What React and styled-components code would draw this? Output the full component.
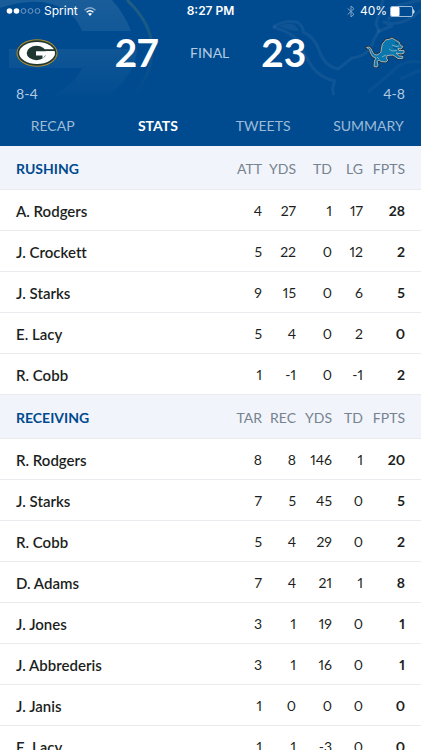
import React, { useState } from 'react'
import styled, { createGlobalStyle } from 'styled-components'

const tabs = ['RECAP', 'STATS', 'TWEETS', 'SUMMARY']

const sections = [
  {
    title: 'RUSHING',
    columns: ['ATT', 'YDS', 'TD', 'LG', 'FPTS'],
    players: [
      ['A. Rodgers', 4, 27, 1, 17, 28],
      ['J. Crockett', 5, 22, 0, 12, 2],
      ['J. Starks', 9, 15, 0, 6, 5],
      ['E. Lacy', 5, 4, 0, 2, 0],
      ['R. Cobb', 1, -1, 0, -1, 2],
    ],
  },
  {
    title: 'RECEIVING',
    columns: ['TAR', 'REC', 'YDS', 'TD', 'FPTS'],
    players: [
      ['R. Rodgers', 8, 8, 146, 1, 20],
      ['J. Starks', 7, 5, 45, 0, 5],
      ['R. Cobb', 5, 4, 29, 0, 2],
      ['D. Adams', 7, 4, 21, 1, 8],
      ['J. Jones', 3, 1, 19, 0, 1],
      ['J. Abbrederis', 3, 1, 16, 0, 1],
      ['J. Janis', 1, 0, 0, 0, 0],
      ['E. Lacy', 1, 1, -3, 0, 0],
    ],
  },
]

function PackersLogo() {
  return (
    <svg width="42" height="28" viewBox="0 0 42 28" aria-label="Green Bay">
      <ellipse cx="21" cy="14" rx="20.5" ry="13.7" fill="#a88b35" />
      <ellipse cx="21" cy="14" rx="19.5" ry="12.8" fill="#203731" />
      <ellipse cx="21" cy="14" rx="17.9" ry="11" fill="#fff" />
      <ellipse cx="20.5" cy="14" rx="9.8" ry="7.2" fill="#203731" />
      <path d="M26 10.2 H39 V12.2 H26 Z" fill="#203731" />
      <path d="M20 12.2 H38.5 V16.6 H29 Q28.5 18 26.5 19.4 V16.6 H20 Z" fill="#fff" />
    </svg>
  )
}

const lionBody =
  'M1.5 10.5 Q4 9 6 11.5 L7.5 15 Q9 18.5 12 18 Q14.5 17 16 15 L16.5 11 Q17 6 19.5 4.5 Q20 2 24 2.5 L27 1 L31 3.5 L34 5 L35.5 8.5 L38 9.5 L36 12 L33 11.5 L34 13.5 L39 13.5 L39 16 L36 17 L31 16 L34.5 19 L38 19.5 L37.5 21.5 L33 21.5 L28 18 L22 18.5 L21.5 22 L23 23 L21 25 L16 24.5 L14 23 L12 24.5 L13 28 L12 30 L9 29.5 L9.5 24 L11 21 Q7 20.5 5.5 16 L4.5 12.5 Z'

function LionsLogo() {
  return (
    <svg width="40" height="32" viewBox="0 0 40 32" aria-label="Detroit">
      <path d={lionBody} fill="none" stroke="#22303c" strokeWidth="2.2" strokeLinejoin="round" />
      <path d={lionBody} fill="#0878ae" stroke="#b3babd" strokeWidth="0.9" strokeLinejoin="round" />
      <path d="M27 8 L31 9.5 L34 9 M24 12 L27 14 L32 13.5 M17 20 L21 18 M12 20 L14 22" fill="none" stroke="#9fb6c4" strokeWidth="0.8" />
      <path d="M30 5.5 L33 7.5 M28 10.5 L32 11.5" fill="none" stroke="#173a55" strokeWidth="0.8" />
    </svg>
  )
}

function PackersMark() {
  return (
    <Mark width="160" height="100" viewBox="0 0 160 100" aria-hidden="true">
      <defs>
        <linearGradient id="fade" x1="0" y1="0" x2="0" y2="100" gradientUnits="userSpaceOnUse">
          <stop offset="0" stopColor="#fff" stopOpacity="0.1" />
          <stop offset="0.6" stopColor="#fff" stopOpacity="0.05" />
          <stop offset="1" stopColor="#fff" stopOpacity="0" />
        </linearGradient>
        <linearGradient id="ring" x1="0" y1="0" x2="0" y2="95" gradientUnits="userSpaceOnUse">
          <stop offset="0" stopColor="#8b9a5b" stopOpacity="0.25" />
          <stop offset="1" stopColor="#8b9a5b" stopOpacity="0" />
        </linearGradient>
      </defs>
      <path d="M0 0 H112 Q124 13 131 31 H82 Q74 11 52 4 Q30 -2 0 8 Z" fill="url(#fade)" />
      <path d="M9 49 H137 Q136 74 108 96 H50 Q74 86 82 68 H9 Z" fill="url(#fade)" />
      <path d="M127 0 Q152 24 152 49 Q152 73 136 92" fill="none" stroke="url(#ring)" strokeWidth="3" />
    </Mark>
  )
}

function LionsMark() {
  return (
    <Mark $right width="150" height="100" viewBox="271 0 150 100" aria-hidden="true">
      <g fill="none" stroke="#fff" strokeOpacity="0.06" strokeWidth="3" strokeLinejoin="round">
        <path d="M273 27 Q284 20 297 22 Q304 27 303 32 Q314 36 319 50 Q324 66 338 69 L352 58 Q370 56 374 39 L379 31 L376 24 L383 0" />
        <path d="M273 27 Q293 33 299 42 Q306 58 313 68 Q321 78 335 81 Q331 88 334 95" />
        <path d="M377 32 L392 26 L384 22 Q402 28 421 10 M388 20 L399 5 L421 0" />
        <path d="M421 62 Q402 59 392 72 L368 92 M421 70 L400 79" strokeOpacity="0.03" />
      </g>
      <path d="M279 26 Q288 22 295 25 L299 31 Q288 31 279 26 Z" fill="#fff" fillOpacity="0.06" />
    </Mark>
  )
}

function App() {
  const [active, setActive] = useState('STATS')
  return (
    <Page>
      <GlobalStyle />
      <Header>
        <PackersMark />
        <LionsMark />
        <StatusBar>
          <Carrier>
            <svg width="36" height="8" viewBox="0 0 36 8">
              <circle cx="3.5" cy="4" r="2.8" fill="#fff" />
              <circle cx="10.5" cy="4" r="2.8" fill="#fff" />
              <circle cx="17.5" cy="4" r="2.4" fill="none" stroke="#8cacd0" strokeWidth="0.8" />
              <circle cx="24.5" cy="4" r="2.4" fill="none" stroke="#8cacd0" strokeWidth="0.8" />
              <circle cx="31.5" cy="4" r="2.4" fill="none" stroke="#8cacd0" strokeWidth="0.8" />
            </svg>
            Sprint
            <Wifi width="12" height="9" viewBox="0 0 12 9" fill="none" strokeWidth="1.4">
              <path d="M0.6 3.2 Q6 -1.6 11.4 3.2" stroke="#8cacd0" />
              <path d="M2.6 5.2 Q6 2.2 9.4 5.2" stroke="#fff" />
              <path d="M4 6.8 Q6 5.2 8 6.8 L6 9 Z" fill="#fff" />
            </Wifi>
          </Carrier>
          <Clock>8:27 PM</Clock>
          <Power>
            <svg width="8" height="13" viewBox="0 0 8 13" fill="none" stroke="#7fa5cb" strokeWidth="1">
              <path d="M0.7 3.5 L7 9.3 L4 12 V1 L7 3.7 L0.7 9.5" />
            </svg>
            <Percent>40%</Percent>
            <svg width="25" height="11" viewBox="0 0 25 11">
              <rect x="0.5" y="0.5" width="22" height="10" rx="1.5" fill="none" stroke="#9dbbd8" />
              <rect x="1" y="1" width="8.5" height="9" rx="1" fill="#fff" />
              <path d="M23.5 3.5 Q25 5.5 23.5 7.5 Z" fill="#fff" stroke="#fff" strokeWidth="0.5" />
            </svg>
          </Power>
        </StatusBar>
        <Scoreboard>
          <PackersLogo />
          <Result>
            <Score>27</Score>
            <Final>FINAL</Final>
            <Score>23</Score>
          </Result>
          <LionsLogo />
        </Scoreboard>
        <Records>
          <span>8-4</span>
          <span>4-8</span>
        </Records>
        <Tabs>
          {tabs.map(tab => (
            <Tab key={tab} $active={tab === active} onClick={() => setActive(tab)}>{tab}</Tab>
          ))}
        </Tabs>
      </Header>
      {sections.map(section => (
        <Table key={section.title}>
          <thead>
            <tr>
              <Title scope="col">{section.title}</Title>
              {section.columns.map(name => <Column key={name} scope="col">{name}</Column>)}
            </tr>
          </thead>
          <tbody>
            {section.players.map(([name, ...stats]) => (
              <tr key={name}>
                <Player scope="row">{name}</Player>
                {stats.map((value, i) => <Stat key={i}>{value}</Stat>)}
              </tr>
            ))}
          </tbody>
        </Table>
      ))}
    </Page>
  )
}

export default App

const GlobalStyle = createGlobalStyle`
  body {
    margin: 0;
    background: #fff;
  }
`

const Page = styled.div`
  font-family: Lato, 'Liberation Sans', sans-serif;
  font-size: 14px;
  font-variant-numeric: proportional-nums;
  font-variant-ligatures: none;
  color: #1c1f22;
  height: 100vh;
  overflow: hidden;
`

const Header = styled.header`
  position: relative;
  isolation: isolate;
  background: #004b8f;
  color: #fff;
`

/* faded team artwork behind the scoreboard */
const Mark = styled.svg`
  position: absolute;
  z-index: -1;
  top: 0;
  ${props => props.$right ? 'right: 0;' : 'left: 0;'}
`

const StatusBar = styled.div`
  display: grid;
  grid-template-columns: 1fr auto 1fr;
  align-items: center;
  height: 22px;
  padding: 0 6px;
  font: 400 12px/22px Inter, sans-serif;
`

const Carrier = styled.div`
  display: flex;
  align-items: center;
  gap: 2px;
`

const Wifi = styled.svg`
  margin-left: 4px;
`

const Clock = styled.div`
  font-weight: 600;
`

const Power = styled.div`
  display: flex;
  align-items: center;
  justify-content: flex-end;
  gap: 3px;
`

const Percent = styled.span`
  padding-left: 2px;
`

const Scoreboard = styled.div`
  display: grid;
  grid-template-columns: 1fr auto 1fr;
  align-items: center;
  height: 62px;
  padding: 0 16px;
  > svg:last-child {
    justify-self: end;
  }
`

const Result = styled.div`
  display: flex;
  align-items: center;
  gap: 32px;
  padding-bottom: 2px;
`

const Score = styled.div`
  font-size: 39px;
  font-weight: 700;
`

const Final = styled.div`
  color: #b3cae0;
`

const Records = styled.div`
  display: flex;
  justify-content: space-between;
  padding: 0 16px;
  line-height: 20px;
  color: #b3cae0;
`

const Tabs = styled.nav`
  display: flex;
  height: 42px;
`

const Tab = styled.button`
  flex: 1;
  border: 0;
  padding: 0;
  background: none;
  font: inherit;
  font-weight: ${props => props.$active ? 700 : 400};
  color: ${props => props.$active ? '#fff' : '#9dbbd8'};
`

const Table = styled.table`
  width: 100%;
  table-layout: fixed;
  border-collapse: collapse;
  thead tr {
    height: 44px;
    background: #f1f4fa;
  }
  tbody tr {
    height: 41px;
  }
  tr {
    box-shadow: inset 0 -1px #e9ebee;
  }
`

const Title = styled.th`
  padding: 0 0 0 16px;
  text-align: left;
  color: #004b8f;
`

const Column = styled.th`
  width: 34px;
  padding: 0;
  text-align: right;
  font-weight: 400;
  color: #76828f;
  &:nth-child(4) { width: 36px; }
  &:nth-child(5) { width: 31px; }
  &:nth-child(6) { width: 42px; padding-right: 16px; }
`

const Player = styled.th`
  padding: 0 0 0 16px;
  text-align: left;
  font-size: 15px;
  font-weight: 600;
`

const Stat = styled.td`
  padding: 0;
  text-align: right;
  &:last-child {
    padding-right: 16px;
    font-weight: 700;
  }
`
